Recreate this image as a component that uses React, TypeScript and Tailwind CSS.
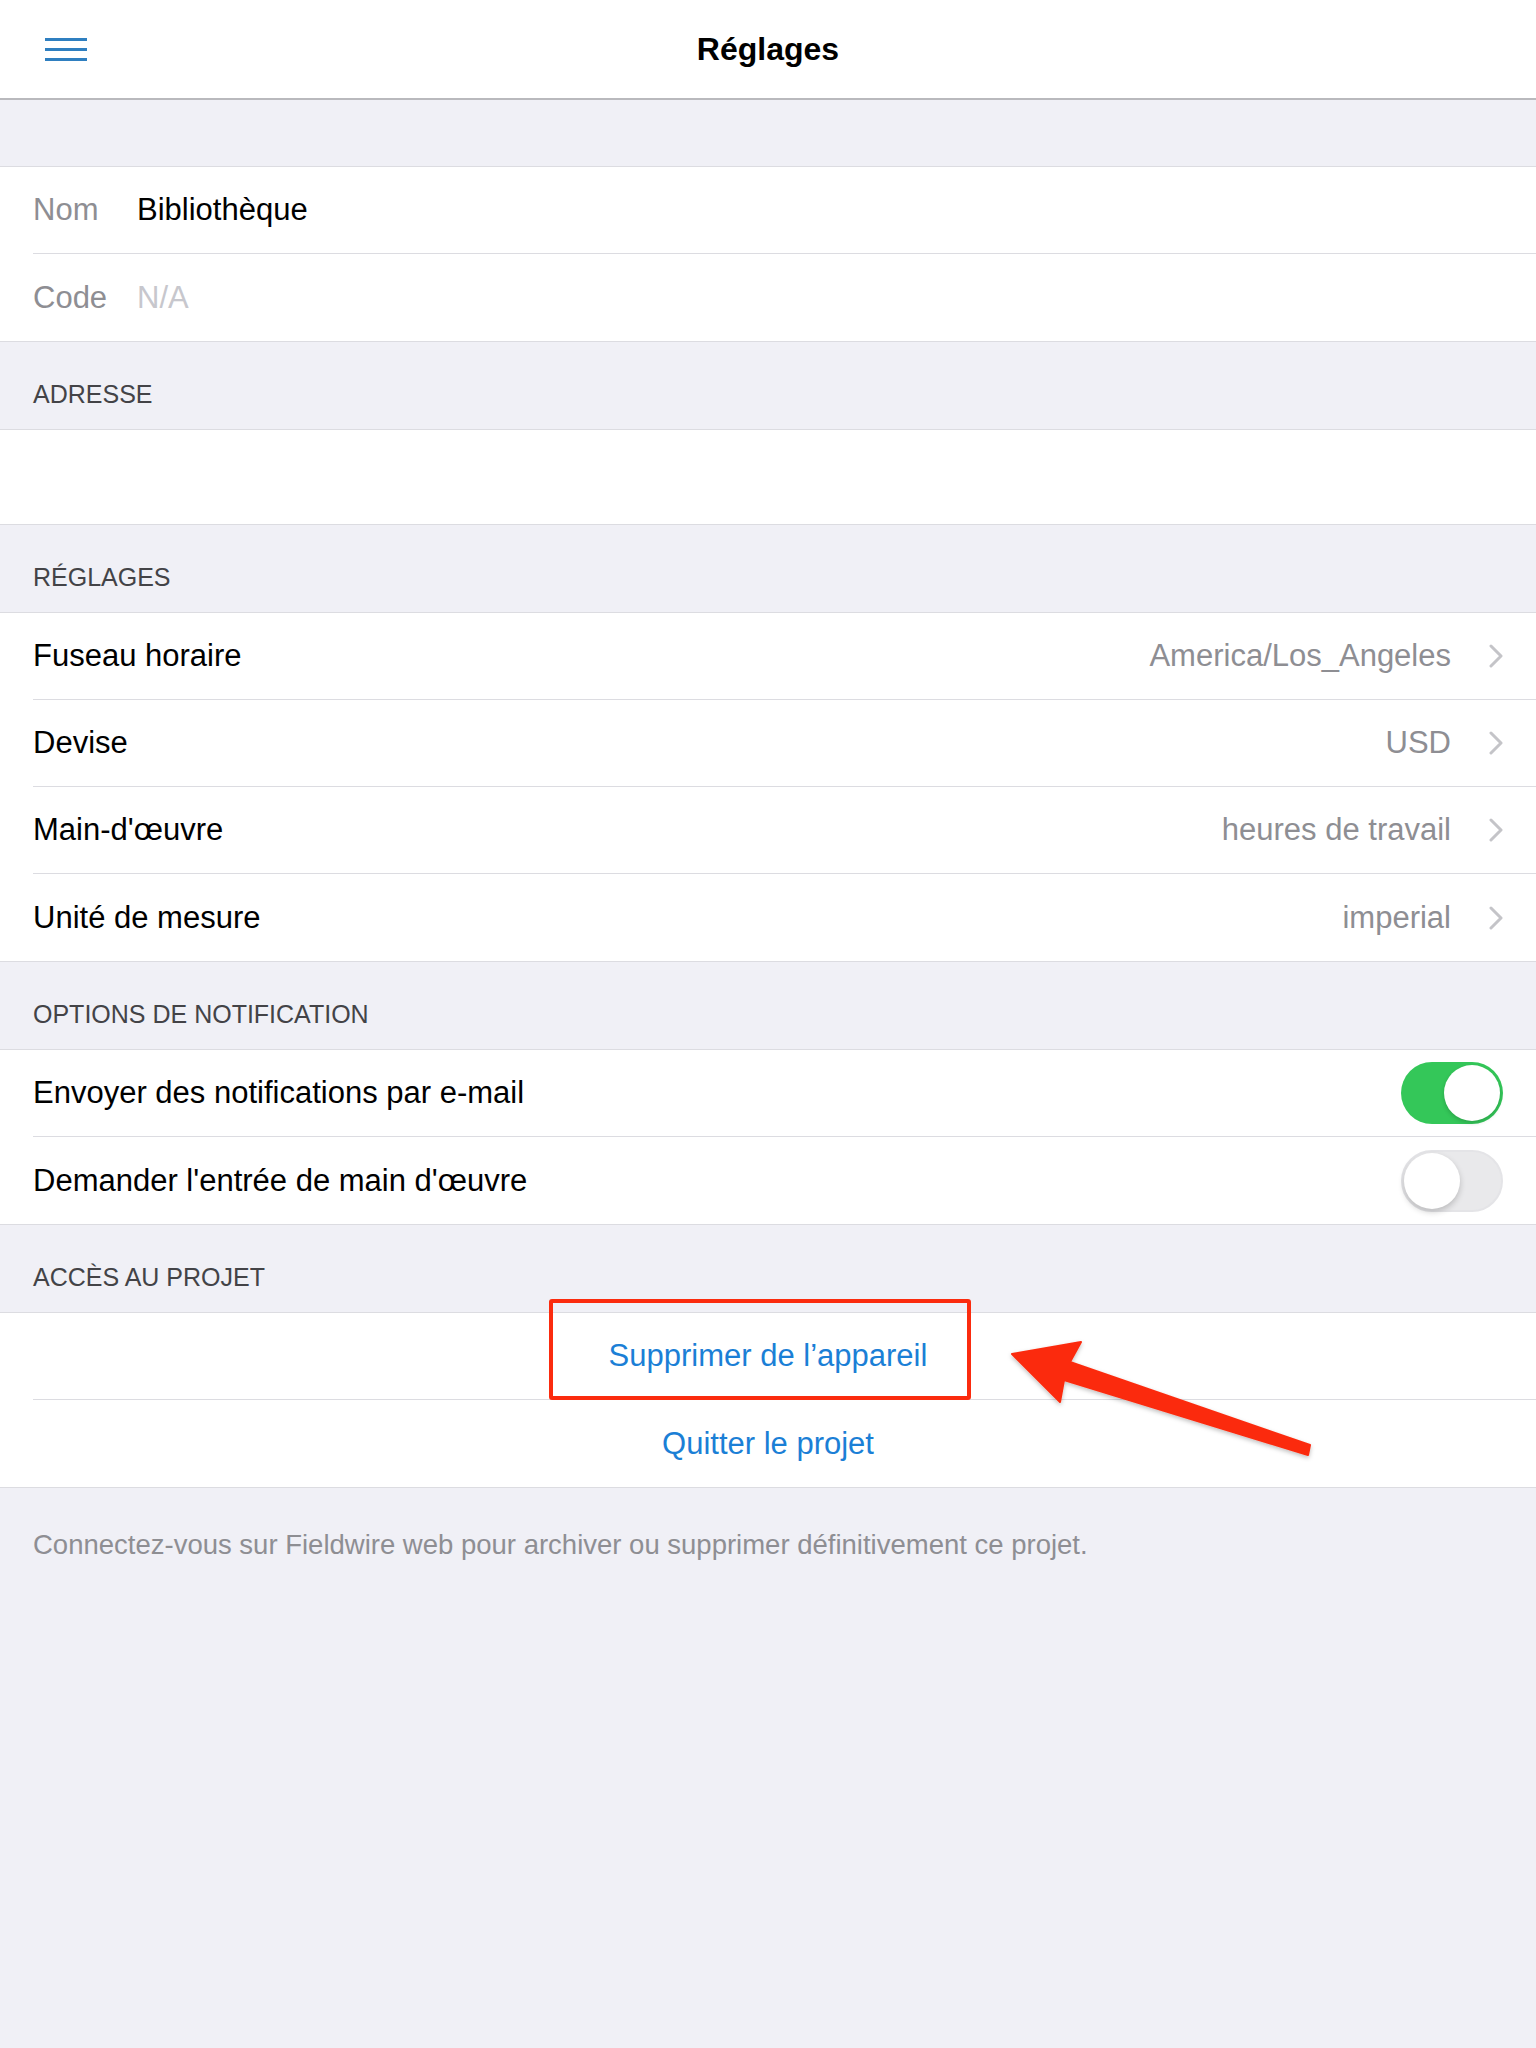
import React from 'react';

const font = "font-['Liberation_Sans',Arial,sans-serif]";

const Chevron = () => (
  <svg width="14" height="24" viewBox="0 0 14 24" className="ml-[38px] shrink-0">
    <polyline points="2,2 12,12 2,22" fill="none" stroke="#c4c4c8" strokeWidth="3" strokeLinecap="round" strokeLinejoin="round" />
  </svg>
);

const Toggle = ({ on }: { on: boolean }) =>
  on ? (
    <div className="flex h-[62px] w-[102px] shrink-0 items-center justify-end rounded-full bg-[#34c759] px-[3px]">
      <div className="h-[56px] w-[56px] rounded-full bg-white shadow-[0_2px_4px_rgba(0,0,0,0.18)]" />
    </div>
  ) : (
    <div className="flex h-[62px] w-[102px] shrink-0 items-center justify-start rounded-full border-2 border-[#e4e4e7] bg-[#e9e9eb] px-[1px]">
      <div className="h-[56px] w-[56px] rounded-full bg-white shadow-[0_3px_6px_rgba(0,0,0,0.2)]" />
    </div>
  );

const Header = ({ children }: { children: React.ReactNode }) => (
  <div className="flex h-[87px] items-end px-[33px] pb-[20px] text-[25px] leading-[30px] text-[#434347]">
    {children}
  </div>
);

const Row = ({ children, last, h = 'h-[87px]' }: { children?: React.ReactNode; last?: boolean; h?: string }) => (
  <div className="pl-[33px]">
    <div className={`flex ${h} items-center pr-[33px] ${last ? '' : 'border-b border-[#dcdce1]'}`}>{children}</div>
  </div>
);

const Section = ({ children }: { children: React.ReactNode }) => (
  <div className="border-y border-[#dcdce1] bg-white text-[31px] leading-[36px] text-black">{children}</div>
);

const NavRow = ({ label, value, last }: { label: string; value: string; last?: boolean }) => (
  <Row last={last}>
    <span className="flex-1">{label}</span>
    <span className="text-[#8e8e93]">{value}</span>
    <Chevron />
  </Row>
);

export default function App() {
  return (
    <div className={`relative min-h-[2048px] w-[1536px] bg-[#f0f0f6] ${font}`}>
      <div className="relative flex h-[100px] items-center justify-center border-b-2 border-[#b9b9bd] bg-white">
        <div className="absolute left-[45px] top-[38px] flex w-[42px] flex-col gap-[7px]">
          <div className="h-[3px] bg-[#2f7fc0]" />
          <div className="h-[3px] bg-[#2f7fc0]" />
          <div className="h-[3px] bg-[#2f7fc0]" />
        </div>
        <span className="text-[32px] font-bold text-black">Réglages</span>
      </div>

      <div className="h-[66px]" />

      <Section>
        <Row>
          <span className="w-[104px] text-[#8e8e93]">Nom</span>
          <span>Bibliothèque</span>
        </Row>
        <Row last>
          <span className="w-[104px] text-[#8e8e93]">Code</span>
          <span className="text-[#c7c7cd]">N/A</span>
        </Row>
      </Section>

      <Header>ADRESSE</Header>
      <Section>
        <Row last h="h-[94px]" />
      </Section>

      <Header>RÉGLAGES</Header>
      <Section>
        <NavRow label="Fuseau horaire" value="America/Los_Angeles" />
        <NavRow label="Devise" value="USD" />
        <NavRow label="Main-d'œuvre" value="heures de travail" />
        <NavRow label="Unité de mesure" value="imperial" last />
      </Section>

      <Header>OPTIONS DE NOTIFICATION</Header>
      <Section>
        <Row>
          <span className="flex-1">Envoyer des notifications par e-mail</span>
          <Toggle on />
        </Row>
        <Row last>
          <span className="flex-1">Demander l'entrée de main d'œuvre</span>
          <Toggle on={false} />
        </Row>
      </Section>

      <Header>ACCÈS AU PROJET</Header>
      <Section>
        <Row>
          <span className="flex-1 text-center text-[#1b7fd6]">Supprimer de l’appareil</span>
        </Row>
        <div className="flex h-[87px] items-center justify-center text-[#1b7fd6]">Quitter le projet</div>
      </Section>

      <div className="px-[33px] pt-[42px] text-[27.5px] leading-[30px] text-[#8e8e93]">
        Connectez-vous sur Fieldwire web pour archiver ou supprimer définitivement ce projet.
      </div>

      <div className="absolute left-[549px] top-[1299px] h-[101px] w-[422px] rounded-[3px] border-[4px] border-[#fb2b0e]" />
      <svg className="absolute left-0 top-0" width="1536" height="2048" viewBox="0 0 1536 2048">
        <defs>
          <filter id="sh" x="-20%" y="-20%" width="140%" height="140%">
            <feDropShadow dx="0" dy="2" stdDeviation="2" floodColor="#000" floodOpacity="0.25" />
          </filter>
        </defs>
        <polygon
          points="1012,1354 1081,1342 1070,1362 1310,1445 1308,1455 1064,1380 1060,1402"
          fill="#fb2b0e"
          strokeLinejoin="round"
          stroke="#fb2b0e"
          strokeWidth="2"
          filter="url(#sh)"
        />
      </svg>
    </div>
  );
}
